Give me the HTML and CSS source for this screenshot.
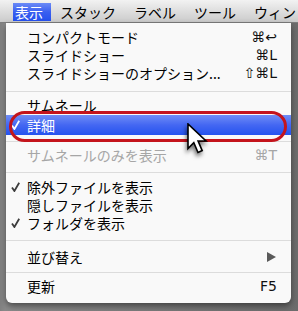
FILE: index.html
```html
<!DOCTYPE html>
<html lang="ja">
<head>
<meta charset="utf-8">
<link rel="stylesheet" href="styles.css">
</head>
<body>
<div class="screen">
  <div class="menubar">
    <span class="mb-item active">表示</span>
    <span class="mb-item">スタック</span>
    <span class="mb-item">ラベル</span>
    <span class="mb-item">ツール</span>
    <span class="mb-item">ウィン</span>
  </div>
  <div class="stage">
    <div class="menu">
      <div class="row"><span class="check"></span><span class="label">コンパクトモード</span><span class="key">⌘↩</span></div>
      <div class="row"><span class="check"></span><span class="label">スライドショー</span><span class="key">⌘L</span></div>
      <div class="row"><span class="check"></span><span class="label">スライドショーのオプション...</span><span class="key">⇧⌘L</span></div>
      <div class="sep sep-a"></div>
      <div class="row tall"><span class="check"></span><span class="label">サムネール</span><span class="key"></span></div>
      <div class="row tall selected"><span class="check"><svg width="9" height="10" viewBox="0 0 9 10"><path d="M1,5.6 L3.4,9 L8.2,0.8" fill="none" stroke="currentColor" stroke-width="1.8"/></svg></span><span class="label">詳細</span><span class="key"></span></div>
      <div class="sep sep-b"></div>
      <div class="row disabled"><span class="check"></span><span class="label">サムネールのみを表示</span><span class="key">⌘T</span></div>
      <div class="sep sep-c"></div>
      <div class="row"><span class="check"><svg width="9" height="10" viewBox="0 0 9 10"><path d="M1,5.6 L3.4,9 L8.2,0.8" fill="none" stroke="currentColor" stroke-width="1.8"/></svg></span><span class="label">除外ファイルを表示</span><span class="key"></span></div>
      <div class="row"><span class="check"></span><span class="label">隠しファイルを表示</span><span class="key"></span></div>
      <div class="row"><span class="check"><svg width="9" height="10" viewBox="0 0 9 10"><path d="M1,5.6 L3.4,9 L8.2,0.8" fill="none" stroke="currentColor" stroke-width="1.8"/></svg></span><span class="label">フォルダを表示</span><span class="key"></span></div>
      <div class="sep sep-d"></div>
      <div class="row"><span class="check"></span><span class="label">並び替え</span><span class="key"><svg class="tri" width="9" height="10" viewBox="0 0 9 10"><polygon points="0,0 9,5 0,10" fill="#5a5a5a"/></svg></span></div>
      <div class="sep sep-e"></div>
      <div class="row"><span class="check"></span><span class="label">更新</span><span class="key">F5</span></div>
    </div>
  </div>
  <div class="oval"></div>
  <svg class="cursor" width="24" height="34" viewBox="0 0 24 34">
    <path d="M2,1 L2,25.5 L7.8,19.6 L12,29.5 L16.2,27.6 L12.1,18 L20,18 Z" fill="#fff" stroke="#000" stroke-width="1.6" stroke-linejoin="miter"/>
  </svg>
</div>
</body>
</html>
```
FILE: styles.css
```css
html, body {
  margin: 0;
  padding: 0;
}
body {
  width: 298px;
  height: 311px;
  overflow: hidden;
  background: #7a7a7a;
  font-family: "Noto Sans CJK JP", "Noto Sans", sans-serif;
}
.screen {
  position: relative;
  width: 298px;
  height: 311px;
  display: flex;
  flex-direction: column;
  background: linear-gradient(to right, #808080 0, #8a8a8a 5px, #6c6c6c 100%);
}
.menubar {
  height: 22px;
  border-bottom: 1px solid #7d7d7d;
  background: linear-gradient(#f2f2f2, #dedede 50%, #cbcbcb);
  display: flex;
  align-items: flex-start;
  padding-left: 13px;
  white-space: nowrap;
  overflow: hidden;
  font-size: 14px;
  color: #000;
}
.mb-item {
  margin-top: 3px;
  height: 18px;
  line-height: 18px;
  padding: 0 9px;
  flex: none;
}
.mb-item.active {
  padding: 0 8px 0 2px;
  color: #fff;
  background: linear-gradient(#6b8af6, #3a5ff0 50%, #2450ee);
}
.stage {
  flex: 1;
  padding: 0 7px 8px 6px;
  display: flex;
}
.menu {
  flex: 1;
  background: #f9f9f9;
  border-radius: 0 0 6px 6px;
  padding: 5px 0 8px;
  box-shadow: 0 3px 6px rgba(0,0,0,0.45);
  font-size: 14px;
  color: #000;
}
.row {
  height: 18px;
  line-height: 18px;
  display: flex;
  align-items: center;
}
.row.tall {
  height: 20px;
}
.check {
  width: 21px;
  box-sizing: border-box;
  padding-left: 5px;
  color: #3c3c3c;
  flex: none;
  display: flex;
  align-items: center;
}
.label {
  flex: 1;
  white-space: nowrap;
}
.key {
  padding-right: 14px;
  font-family: "DejaVu Sans", sans-serif;
  font-size: 14px;
  color: #111;
  display: flex;
  align-items: center;
}
.selected {
  background: linear-gradient(#6f8df6, #4467f2 50%, #2553ef);
  color: #fff;
}
.selected .check {
  color: #fff;
}
.disabled {
  color: #a6a6a6;
}
.disabled .key {
  color: #a6a6a6;
}
.tri {
  display: block;
  margin-right: 1px;
}
.sep {
  height: 1px;
  background: #dcdcdc;
}
.sep-a { margin: 9px 0 3px; }
.sep-b { margin: 6px 0 4px; }
.sep-c { margin: 8px 0 5px; }
.sep-d { margin: 8px 0 7px; }
.sep-e { margin: 6px 0 4px; }
.oval {
  position: absolute;
  left: 9px;
  top: 111px;
  width: 272px;
  height: 25px;
  border: 3px solid #c4141c;
  border-radius: 16px;
}
.cursor {
  position: absolute;
  left: 186px;
  top: 123px;
  filter: drop-shadow(-1px 3px 2px rgba(0,0,0,0.55));
}
```
